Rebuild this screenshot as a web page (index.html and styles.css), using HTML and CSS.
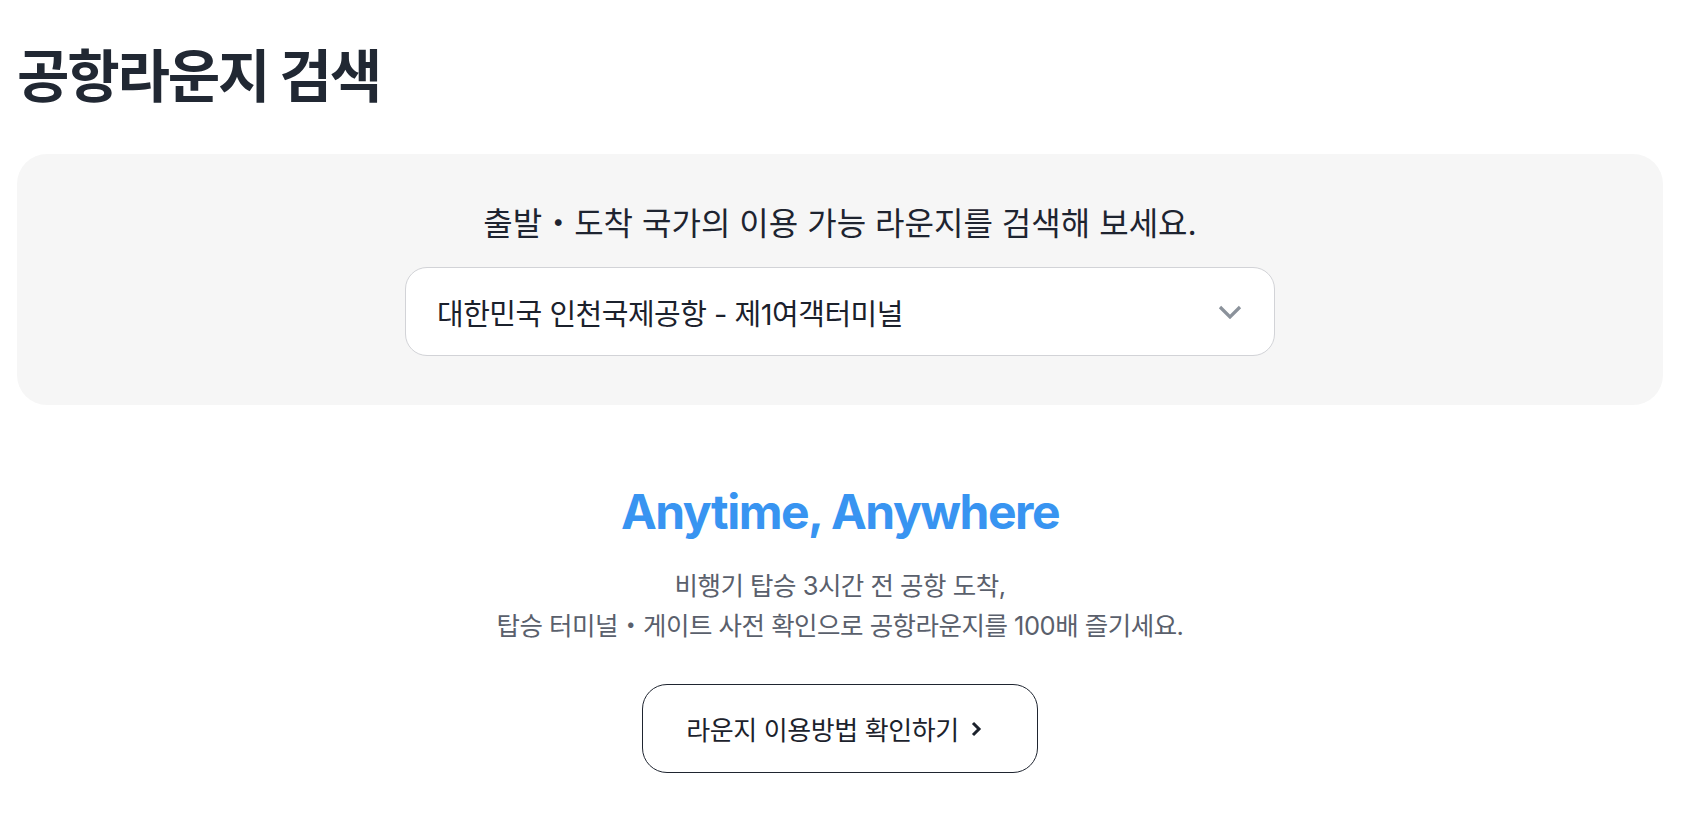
FILE: index.html
```html
<!DOCTYPE html>
<html lang="ko">
<head>
<meta charset="utf-8">
<title>공항라운지 검색</title>
<link rel="stylesheet" href="styles.css">
</head>
<body>
<main class="page">
  <h1 class="page-title">공항라운지 검색</h1>

  <section class="search-panel">
    <p class="search-lead">출발・도착 국가의 이용 가능 라운지를 검색해 보세요.</p>
    <button class="airport-select" type="button">
      <span class="airport-select__value">대한민국 인천국제공항 - 제1여객터미널</span>
      <svg class="airport-select__chevron" width="24" height="14" viewBox="0 0 24 14" aria-hidden="true">
        <polyline points="2,2 12,12 22,2" fill="none" stroke="currentColor" stroke-width="3.2" stroke-linecap="butt" stroke-linejoin="miter"/>
      </svg>
    </button>
  </section>

  <section class="promo">
    <h2 class="promo__title">Anytime, Anywhere</h2>
    <p class="promo__text">비행기 탑승 3시간 전 공항 도착,<br>탑승 터미널・게이트 사전 확인으로 공항라운지를 100배 즐기세요.</p>
    <a class="promo__button" href="#">
      <span>라운지 이용방법 확인하기</span>
      <svg class="promo__arrow" width="12" height="16" viewBox="0 0 12 16" aria-hidden="true">
        <polyline points="3,2 9,8 3,14" fill="none" stroke="currentColor" stroke-width="3"/>
      </svg>
    </a>
  </section>
</main>
</body>
</html>
```

FILE: styles.css
```css
* { box-sizing: border-box; }

html, body {
  margin: 0;
  padding: 0;
  background: #ffffff;
}

body {
  font-family: "Inter", "Noto Sans CJK KR", sans-serif;
  color: #1e2430;
}

.page {
  padding: 45px 25px 0 17px;
}

.page-title {
  margin: 0;
  font-size: 57px;
  line-height: 64px;
  font-weight: 700;
  letter-spacing: -2.2px;
  color: #212833;
}

.search-panel {
  margin-top: 45px;
  background: #f6f6f6;
  border-radius: 30px;
  padding: 50px 0 49px;
  display: flex;
  flex-direction: column;
  align-items: center;
}

.search-lead {
  margin: 0;
  font-size: 32px;
  line-height: 40px;
  font-weight: 400;
  letter-spacing: 0;
  color: #1e2430;
}

.airport-select {
  margin-top: 23px;
  width: 870px;
  height: 89px;
  display: flex;
  align-items: center;
  justify-content: space-between;
  padding: 0 32px 0 31px;
  background: #ffffff;
  border: 1px solid #d2d3d7;
  border-radius: 22px;
  font-family: inherit;
  cursor: pointer;
}

.airport-select__value {
  font-size: 29px;
  font-weight: 400;
  letter-spacing: -0.5px;
  color: #1b212c;
}

.airport-select__chevron {
  color: #8b929b;
  display: block;
}

.promo {
  margin-top: 77px;
  display: flex;
  flex-direction: column;
  align-items: center;
}

.promo__title {
  margin: 0;
  font-size: 48px;
  line-height: 60px;
  font-weight: 700;
  letter-spacing: -1.5px;
  color: #3894f1;
}

.promo__text {
  margin: 24px 0 0;
  text-align: center;
  font-size: 25.5px;
  line-height: 40px;
  font-weight: 400;
  letter-spacing: -0.5px;
  color: #5a606c;
}

.promo__button {
  margin-top: 38px;
  width: 396px;
  height: 89px;
  display: flex;
  align-items: center;
  justify-content: center;
  gap: 11px;
  padding-right: 12px;
  border: 1px solid #1f2530;
  border-radius: 25px;
  text-decoration: none;
  color: #1c222c;
  font-size: 26px;
  font-weight: 400;
  letter-spacing: -0.4px;
}

.promo__arrow {
  display: block;
}
```
